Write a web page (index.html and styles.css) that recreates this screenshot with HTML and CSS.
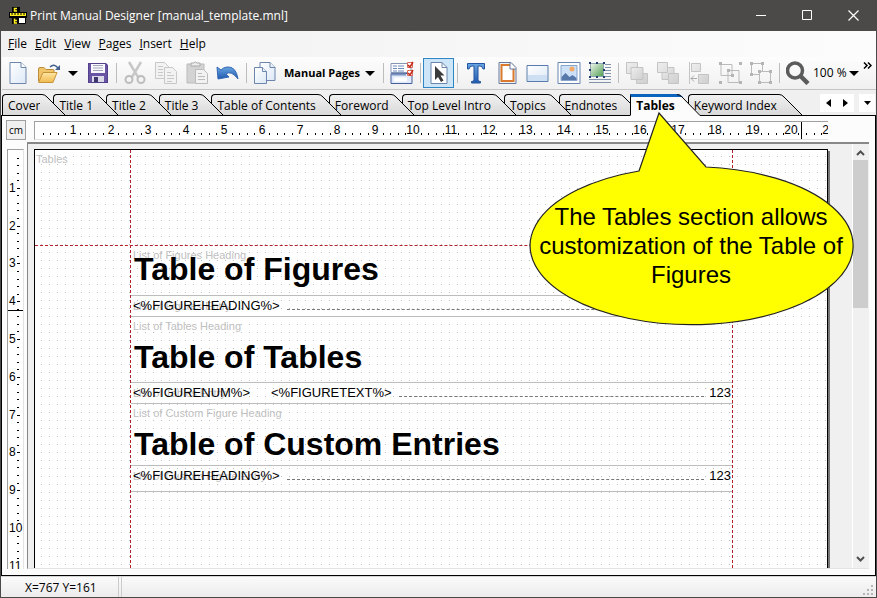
FILE: index.html
```html
<!DOCTYPE html>
<html lang="en">
<head>
<meta charset="utf-8">
<title>Print Manual Designer [manual_template.mnl]</title>
<link rel="stylesheet" href="styles.css">
</head>
<body>
<svg class="defs" aria-hidden="true">
  <defs>
    <linearGradient id="paper" x1="0" y1="0" x2="1" y2="1"><stop offset="0" stop-color="#fff"/><stop offset="1" stop-color="#dce8f6"/></linearGradient>
    <linearGradient id="folder" x1="0" y1="0" x2="0" y2="1"><stop offset="0" stop-color="#ffe7a6"/><stop offset="1" stop-color="#f0b94f"/></linearGradient>
    <linearGradient id="blue" x1="0" y1="0" x2="0" y2="1"><stop offset="0" stop-color="#6aa5e3"/><stop offset="1" stop-color="#2059ae"/></linearGradient>
    <linearGradient id="green" x1="0" y1="0" x2="1" y2="1"><stop offset="0" stop-color="#f0f7ee"/><stop offset="1" stop-color="#4f9d50"/></linearGradient>
    <linearGradient id="grey" x1="0" y1="0" x2="1" y2="1"><stop offset="0" stop-color="#eee"/><stop offset="1" stop-color="#cfcfcf"/></linearGradient>
    <linearGradient id="tabfill" x1="0" y1="0" x2="0" y2="1"><stop offset="0" stop-color="#f1f1f1"/><stop offset="1" stop-color="#d9d9d9"/></linearGradient>
    <symbol id="edge" viewBox="0 0 25 21"><path d="M0 .5H2Q5 .5 7 3L25 21H0Z" stroke="none"/><path d="M0 .5H2Q5 .5 7 3L25 21" fill="none" stroke="#000"/></symbol>
  </defs>
</svg>

<header class="titlebar">
  <svg class="logo" width="18" height="18" viewBox="0 0 18 18"><path d="M3 0h8v5h7v6H11v6H3v-6H0V5h3z" fill="#000"/><path d="M8 1.500H5.500V4H8M5.500 11.500V16H8M5.500 13.500H8" fill="none" stroke="#ffef20" stroke-width="1.5"/><path d="M1 6h16v3H1z" fill="#ffef20"/><path d="M3 6v2M6 6v2M9 6v2M12 6v2M15 6v2" stroke="#000"/><path d="M9.500 10.500h7v6h-7z" fill="#fff" stroke="#000"/></svg>
  <h1>Print Manual Designer [manual_template.mnl]</h1>
  <button class="win" aria-label="Minimize"><svg width="11" height="11"><path d="M0 5.5h10" stroke="#fff"/></svg></button>
  <button class="win" aria-label="Maximize"><svg width="11" height="11"><path d="M.5 .5h9v9h-9z" fill="none" stroke="#fff"/></svg></button>
  <button class="win" aria-label="Close"><svg width="11" height="11"><path d="M.5 .5l10 10M10.500 .5l-10 10" stroke="#fff" stroke-width="1.2"/></svg></button>
</header>

<nav class="menu" aria-label="Main menu">
  <button><u>F</u>ile</button><button><u>E</u>dit</button><button><u>V</u>iew</button><button><u>P</u>ages</button><button><u>I</u>nsert</button><button><u>H</u>elp</button>
</nav>

<div class="toolbar" role="toolbar" aria-label="Tools">
  <button class="tool" aria-label="New"><svg viewBox="0 0 24 24"><path d="M4 1.500h11l5 5v16H4z" fill="url(#paper)" stroke="#6c86ad"/><path d="M15 1.500v5h5" fill="#fff" stroke="#6c86ad"/></svg></button>
  <button class="tool" aria-label="Open"><svg viewBox="0 0 24 24"><path d="M1.500 20V8q0-1.500 1.500-1.500h4l2 2h7q1 0 1 1V12" fill="#f0c468" stroke="#b98b3a"/><path d="M1.500 21.500L6 11.500h14l-4 10z" fill="url(#folder)" stroke="#c79337"/><path d="M13 6q4-4 8 1" fill="none" stroke="#44628f" stroke-width="1.500"/><path d="M23 4v5h-5z" fill="#44628f"/></svg></button>
  <button class="drop" aria-label="Recent files"><i class="caret"></i></button>
  <button class="tool" aria-label="Save"><svg viewBox="0 0 24 24"><path d="M2 2h18l2 2v18H2z" fill="#6953a5"/><path d="M5 2h14v10H5z" fill="#f8f8fc"/><path d="M7 4.500h10M7 7h10M7 9.500h10" stroke="#a5a3ba"/><path d="M6 15h12v7H6z" fill="#d9d9e8"/><path d="M8 16h4v6H8z" fill="#41366e"/><path d="M2.500 2.500h17l2 2v17h-19z" fill="none" stroke="#53418b"/></svg></button>
  <span class="sep"></span>
  <button class="tool" aria-label="Cut" disabled><svg viewBox="0 0 24 24"><path d="M6 1l9 15M18 1L9 16" stroke="#c8c8c8" stroke-width="2.500"/><circle cx="6" cy="18.500" r="3.500" fill="none" stroke="#bdbdbd" stroke-width="2"/><circle cx="18" cy="18.500" r="3.500" fill="none" stroke="#bdbdbd" stroke-width="2"/></svg></button>
  <button class="tool" aria-label="Copy" disabled><svg viewBox="0 0 24 24"><g fill="#f2f2f2" stroke="#c8c8c8"><path d="M1.500 1.500h9l4 4v12h-13z"/><path d="M10.500 6.500h8l4 4v12h-12z"/><path d="M4 5.500h5M4 8.500h5M4 11.500h5M4 14.500h5M13 11.500h4M13 14.500h7M13 17.500h7M13 20.500h5"/></g></svg></button>
  <button class="tool" aria-label="Paste" disabled><svg viewBox="0 0 24 24"><path d="M2 3h17v19H2z" fill="#d3d3d3" stroke="#bbb"/><path d="M6 5V2h3q1-2 3 0h3v3z" fill="#eee" stroke="#aaa"/><path d="M10.500 8.500h8l4 4v10h-12z" fill="#f2f2f2" stroke="#bbb"/><path d="M13 12.500h4M13 15.500h7M13 18.500h7" stroke="#bbb"/></svg></button>
  <button class="tool" aria-label="Undo"><svg viewBox="0 0 24 24"><path d="M1 6l1 12 11-2-3-3q5-4 12 5Q20 5 11 6 7 6.500 5 9z" fill="url(#blue)" stroke="#3369b2"/></svg></button>
  <span class="sep"></span>
  <button class="tool" aria-label="Pages"><svg viewBox="0 0 24 24"><g fill="url(#paper)" stroke="#6c86ad"><path d="M7 1.500h10l5 5v13H7z"/><path d="M17 1.500v5h5"/><path d="M1.500 6.500h8l4 4v12h-12z"/><path d="M9.500 6.500v4h4"/></g></svg></button>
  <button class="mode">Manual Pages <i class="caret"></i></button>
  <span class="sep"></span>
  <button class="tool" aria-label="Page options"><svg viewBox="0 0 24 24"><path d="M1 2.500h20v9H1z" fill="#fff" stroke="#8497b5"/><path d="M3 5h4M3 7.500h4M3 10h4M8 5h6M8 7.500h6M8 10h6" stroke="#6c8abb"/><path d="M1 12.500h21v10H1z" fill="#e1eafa" stroke="#465f99"/><path d="M1 13.500h15" stroke="#7c94c0" stroke-width="2"/><path d="M4 18.500h13" stroke="#fff" stroke-width="4"/><path d="M17.500 1.500h5v5h-5zM17.500 9.500h5v5h-5z" fill="#fff" stroke="#d66b5e"/><path d="M18 4l2 2 3-5M18 12l2 2 3-5" fill="none" stroke="#c42919" stroke-width="1.500"/></svg></button>
  <span class="sep"></span>
  <button class="tool active" aria-label="Select" aria-pressed="true"><svg viewBox="0 0 24 24"><path d="M4 1.500h11l5 5v16H4z" fill="#fff" stroke="#6c86ad"/><path d="M15 1.500v5h5" fill="none" stroke="#6c86ad"/><path d="M8 5v14l3-3 3 5 2.500-1.500-3-5h4z" fill="#3b3b3b"/></svg></button>
  <span class="sep"></span>
  <button class="tool" aria-label="Text"><svg viewBox="0 0 24 24"><path d="M3.500 2.500h17V8H19q-.5-3-3-3h-2v14q0 1.500 2.500 1.500V22h-9v-1.500q2.500 0 2.500-1.500V5H8Q5.500 5 5 8H3.500z" fill="url(#blue)" stroke="#2455a0"/></svg></button>
  <button class="tool" aria-label="Page frame"><svg viewBox="0 0 24 24"><path d="M4 1.500h12l5 5v16H4z" fill="#eef3fa" stroke="#68799c"/><path d="M6.500 4h8.500l3.500 3.500V20h-12z" fill="#fff" stroke="#d97a2e" stroke-width="2"/><path d="M15 2v6h6" fill="#fff" stroke="#68799c"/></svg></button>
  <button class="tool" aria-label="Rectangle"><svg viewBox="0 0 24 24"><path d="M1 4.500h21v16H1z" fill="url(#paper)" stroke="#587aac"/><path d="M2 14h19v6H2z" fill="#cddff3"/></svg></button>
  <button class="tool" aria-label="Image"><svg viewBox="0 0 24 24"><path d="M1 1.500h22v21H1z" fill="#fff" stroke="#6685b0"/><path d="M4 4.500h16v15H4z" fill="#cce1f8" stroke="#85a5cc"/><circle cx="15" cy="8" r="2.500" fill="#f4a965"/><path d="M4.500 19v-3l4-4 4 4 3-2 4 3v2z" fill="#5678ab"/></svg></button>
  <button class="tool" aria-label="Image with text"><svg viewBox="0 0 24 24"><path d="M17 3.500h6M17 6.500h6M17 9.500h6M17 12.500h6M17 15.500h6M1 18.500h22M1 21.500h22" stroke="#8292a8"/><path d="M2.500 2.500h13v13h-13z" fill="url(#green)" stroke="#8fa5b0"/><path d="M1 1h2v2H1zM8 1h2v2H8zM15 1h2v2h-2zM1 8h2v2H1zM15 8h2v2h-2zM1 15h2v2H1zM8 15h2v2H8zM15 15h2v2h-2z" fill="#223c70"/></svg></button>
  <span class="sep"></span>
  <button class="tool" aria-label="Bring to front" disabled><svg viewBox="0 0 24 24"><g fill="url(#grey)" stroke="#c4c4c4"><path d="M1.500 1.500h11v11h-11zM11.500 12.500h11v10h-11z"/><path d="M6 6.500h12v12H6z"/></g></svg></button>
  <button class="tool" aria-label="Send to back" disabled><svg viewBox="0 0 24 24"><g fill="url(#grey)" stroke="#c4c4c4"><path d="M6 6.500h12v12H6z"/><path d="M1.500 1.500h10v10h-10zM12.500 12.500h10v10h-10z"/></g></svg></button>
  <button class="tool" aria-label="Align" disabled><svg viewBox="0 0 24 24"><path d="M2.500 1v22" stroke="#c4c4c4"/><path d="M4.500 2.500h9v8h-9zM11.500 13.500h10v9h-10z" fill="url(#grey)" stroke="#c4c4c4"/><path d="M4 17.500h6M7 14.500l-3 3 3 3" fill="none" stroke="#aaa"/></svg></button>
  <button class="tool" aria-label="Group" disabled><svg viewBox="0 0 24 24"><path d="M3 3.500h11v11H3zM10 9.500h11v12H10z" fill="none" stroke="#bbb"/><path d="M1 1h3v3H1zM21 1h3v3h-3zM1 20h3v3H1zM21 20h3v3h-3zM9 8h3v3H9zM13 13h3v3h-3z" fill="#b5b5b5"/></svg></button>
  <button class="tool" aria-label="Ungroup" disabled><svg viewBox="0 0 24 24"><path d="M10 13.500H2.500v-11h11V10M10.500 10.500h11v11h-11z" fill="none" stroke="#bbb"/><path d="M1 1h3v3H1zM12 1h3v3h-3zM1 12h3v3H1zM9 9h3v3H9zM20 9h3v3h-3zM9 20h3v3H9zM20 20h3v3h-3z" fill="#b5b5b5"/></svg></button>
  <span class="sep"></span>
  <button class="tool" aria-label="Zoom"><svg viewBox="0 0 24 24"><circle cx="9" cy="9.500" r="7.500" fill="none" stroke="#5b5b5b" stroke-width="3.500"/><path d="M14.500 15l7.500 7.500" stroke="#5b5b5b" stroke-width="4.500"/></svg></button>
  <button class="zoom">100 % <i class="caret"></i></button>
  <button class="more" aria-label="More tools"><svg width="9" height="7"><path d="M1 .5l3 3-3 3M5 .5l3 3-3 3" fill="none" stroke="#000" stroke-width="1.500"/></svg></button>
</div>

<div class="tabbar">
  <div class="tabs" role="tablist">
    <button class="tab" role="tab"><span>Cover</span><svg><use href="#edge"/></svg></button>
    <button class="tab" role="tab"><span>Title 1</span><svg><use href="#edge"/></svg></button>
    <button class="tab" role="tab"><span>Title 2</span><svg><use href="#edge"/></svg></button>
    <button class="tab" role="tab"><span>Title 3</span><svg><use href="#edge"/></svg></button>
    <button class="tab" role="tab"><span>Table of Contents</span><svg><use href="#edge"/></svg></button>
    <button class="tab" role="tab"><span>Foreword</span><svg><use href="#edge"/></svg></button>
    <button class="tab" role="tab"><span>Top Level Intro</span><svg><use href="#edge"/></svg></button>
    <button class="tab" role="tab"><span>Topics</span><svg><use href="#edge"/></svg></button>
    <button class="tab" role="tab"><span>Endnotes</span><svg><use href="#edge"/></svg></button>
    <button class="tab selected" role="tab" aria-selected="true"><span>Tables</span><svg viewBox="0 0 25 22"><path d="M0 .5H2Q5 .5 7 3L25 21.500V22H0Z" fill="#fcfcfc"/><path d="M0 0H2Q5 0 8 3H0Z" fill="#0a64bd"/><path d="M2 .5Q5 .5 7 3L25 21.500" fill="none" stroke="#000"/></svg></button>
    <button class="tab" role="tab"><span>Keyword Index</span><svg><use href="#edge"/></svg></button>
  </div>
  <div class="tabnav">
    <button aria-label="Previous tab"><svg width="5" height="8"><path d="M5 0v8L0 4z"/></svg></button>
    <button aria-label="Next tab"><svg width="5" height="8"><path d="M0 0v8l5-4z"/></svg></button>
    <button class="list" aria-label="Tab list"><svg width="7" height="4"><path d="M0 0h7L3.500 4z"/></svg></button>
  </div>
</div>

<main class="workspace">
  <button class="unit">cm</button>
  <div class="ruler across" aria-hidden="true"><svg id="hruler"></svg></div>
  <div class="ruler down" aria-hidden="true"><svg id="vruler"></svg></div>
  <section class="canvas">
    <div class="page">
      <span class="hint page-name">Tables</span>
      <div class="body">
        <div class="frame first"><span class="hint">List of Figures Heading</span><h2>Table of Figures</h2></div>
        <div class="entry"><span class="hint">List of Figures Entry</span><p><span>&lt;%FIGUREHEADING%&gt;</span><i class="leader"></i><span>123</span></p></div>
        <div class="frame"><span class="hint">List of Tables Heading</span><h2>Table of Tables</h2></div>
        <div class="entry"><span class="hint">List of Tables Entry</span><p><span class="num">&lt;%FIGURENUM%&gt;</span><span>&lt;%FIGURETEXT%&gt;</span><i class="leader"></i><span>123</span></p></div>
        <div class="frame"><span class="hint">List of Custom Figure Heading</span><h2>Table of Custom Entries</h2></div>
        <div class="entry last"><span class="hint">List of Custom Figure Entry</span><p><span>&lt;%FIGUREHEADING%&gt;</span><i class="leader"></i><span>123</span></p></div>
      </div>
      <i class="guide left"></i><i class="guide right"></i><i class="guide top"></i>
    </div>
    <div class="scrollbar" aria-hidden="true">
      <svg width="9" height="6"><path d="M1 5l3.500-3.500L8 5" fill="none" stroke="#505050" stroke-width="2"/></svg>
      <i class="thumb"></i>
      <svg width="9" height="6"><path d="M1 1l3.500 3.500L8 1" fill="none" stroke="#505050" stroke-width="2"/></svg>
    </div>
  </section>
  <aside class="callout">
    <svg viewBox="0 0 326 216"><path d="M110 60L130 2L177 56A161.500 79 0 1 1 110 60Z" fill="#ff0" stroke="#222" stroke-width="1.200"/></svg>
    <p>The Tables section allows customization of the Table of Figures</p>
  </aside>
</main>

<footer class="status">
  <span class="coords">X=767 Y=161</span>
  <span class="message"></span>
  <svg width="11" height="11"><path d="M8 0h2v2H8zM4 4h2v2H4zM8 4h2v2H8zM0 8h2v2H0zM4 8h2v2H4zM8 8h2v2H8z" fill="#b5b5b5"/></svg>
</footer>
<script src="rulers.js"></script>
</body>
</html>
```
FILE: styles.css
```css
* { box-sizing: border-box; }
body {
  margin: 0;
  height: 100vh;
  display: flex;
  flex-direction: column;
  overflow: hidden;
  background: #f0f0f0;
  border: solid #4b4a48;
  border-width: 0 1px 1px;
  color: #000;
  font: 12px/16px "Open Sans", "Noto Sans", sans-serif;
}
button { margin: 0; padding: 0; border: 0; background: none; color: inherit; font: inherit; }
h1, h2, p { margin: 0; }
.defs { position: absolute; width: 0; height: 0; }

.titlebar { flex: none; display: flex; align-items: center; height: 31px; padding-left: 8px; background: #4b4a48; color: #fff; }
.titlebar h1 { flex: 1; padding-left: 3px; font-size: 12px; font-weight: 400; }
.win { width: 46px; height: 31px; display: grid; place-items: center; }

.menu { flex: none; display: flex; gap: 8px; height: 26px; padding-left: 7px; align-items: center; background: linear-gradient(90deg, #f0f0f0, #fcfcfc); }

.toolbar {
  flex: none;
  display: flex;
  align-items: center;
  height: 33px;
  margin-left: 1px;
  background: linear-gradient(#fdfdfd, #f0f0f0);
  border-bottom: 1px solid #c5c5c5;
}
.tool { flex: none; width: 31px; height: 30px; display: grid; place-items: center; }
.tool svg { width: 24px; height: 24px; }
.tool.active { background: #cde6f7; border: 1px solid #2f86c5; }
.sep { flex: none; width: 6px; height: 20px; background: linear-gradient(#bdbdbd, #bdbdbd) 3px 0 / 1px 100% no-repeat; }
.drop { width: 18px; }
.caret { display: inline-block; border: solid transparent; border-width: 5px 5px 0; border-top-color: #000; vertical-align: middle; }
.mode { width: 100px; display: flex; align-items: center; justify-content: space-between; padding: 0 5px 0 4px; font-size: 11px; font-weight: 700; white-space: nowrap; }
.zoom { width: 46px; display: flex; align-items: center; justify-content: space-between; white-space: nowrap; }
.more { flex: 1; align-self: flex-start; padding-top: 4px; line-height: 8px; }

.tabbar { flex: none; display: flex; height: 26px; padding: 4px 0 0 1px; background: linear-gradient(#000, #000) 0 100% / 100% 1px no-repeat #f0f0f0; }
.tabs { display: flex; flex: 1; min-width: 0; isolation: isolate; }
.tab { display: flex; flex: none; height: 22px; margin-right: -12px; position: relative; white-space: nowrap; }
.tab span {
  height: 22px;
  padding: 3px 0 0 5px;
  border: solid #000;
  border-width: 1px 0 1px 1px;
  border-radius: 4px 0 0 0;
  background: linear-gradient(#f1f1f1, #d9d9d9);
}
.tab svg { width: 25px; height: 21px; fill: url(#tabfill); }
.tab:nth-child(1) { z-index: 11; }
.tab:nth-child(2) { z-index: 10; }
.tab:nth-child(3) { z-index: 9; }
.tab:nth-child(4) { z-index: 8; }
.tab:nth-child(5) { z-index: 7; }
.tab:nth-child(6) { z-index: 6; }
.tab:nth-child(7) { z-index: 5; }
.tab:nth-child(8) { z-index: 4; }
.tab:nth-child(9) { z-index: 3; }
.tab.selected { z-index: 12; font-weight: 700; }
.tab.selected span { padding-top: 1px; border-top: 3px solid #0a64bd; border-bottom-color: #fcfcfc; background: #fcfcfc; border-radius: 0; }
.tab.selected svg { height: 22px; }
.tabnav { flex: none; display: flex; height: 18px; padding-right: 1px; }
.tabnav button { width: 17px; background: #fff; display: grid; place-items: center; }
.tabnav .list { width: 16px; margin-left: 5px; }

.workspace {
  flex: 1;
  min-height: 0;
  position: relative;
  display: grid;
  grid-template: 26px 1fr / 25px 1fr;
  padding-right: 6px;
  padding-bottom: 6px;
  border: solid #000;
  border-width: 0 1px 1px;
  background: #fcfcfc;
}
.unit { width: 20px; height: 20px; margin: 4px 0 0 4px; border: 1px solid #a0a0a0; background: #f0f0f0; font-size: 10px; line-height: 16px; }
.ruler { overflow: hidden; border: solid #a0a0a0; border-width: 1px 0 0 1px; background: #fff; }
.ruler svg { display: block; font: 12px "Liberation Sans", sans-serif; shape-rendering: crispEdges; }
.across { height: 19px; margin: 5px 41px 0 7px; border-bottom: 1px solid #e3e3e3; }
.down { width: 17px; margin: 7px 0 0 5px; border-right: 1px solid #e3e3e3; }

.canvas { min-height: 0; overflow: hidden; display: flex; border: solid #888; border-width: 2px 0 0 1px; border-bottom: 1px solid #e3e3e3; background: #f0f0f0; }
.page {
  flex: 1;
  position: relative;
  margin: 5px 24px 0 6px;
  border: solid #000;
  border-width: 1px 1px 0;
  box-shadow: 2px 2px #777;
  background: conic-gradient(from 0deg at 1px 1px, transparent 75%, #bdbdbd 0) 6px 6px / 8px 8px #fff;
}
.hint { color: #c0c0c0; font: 11px/14px "Liberation Sans", sans-serif; }
.page-name { display: block; padding: 2px 1px; }
.body { margin: 77px 94px 0 96px; font-family: "Liberation Sans", sans-serif; }
.frame, .entry { display: grid; grid-template-rows: 19px 1fr; }
.frame { height: 65px; padding-left: 2px; }
.frame .hint, .frame h2 { grid-column: 1; }
.frame .hint { padding-top: 2px; }
.frame h2 { padding-left: 1px; font-size: 32px; line-height: 42px; }
.frame.first { height: 50px; }
.frame.first h2 { grid-row: 1; padding-top: 3px; }
.frame.first .hint { grid-row: 1; padding-top: 3px; }
.frame:nth-child(5) { height: 61px; }
.entry { height: 22px; border: solid #bdbdbd; border-width: 1px 0; }
.entry.last { height: 27px; }
.entry > * { grid-area: 1 / 1; }
.entry .hint { padding: 3px 0 0 2px; }
.entry p { display: flex; padding: 0 2px; font-size: 13px; line-height: 20px; position: relative; }
.entry .num { width: 138px; }
.leader { flex: 1; height: 14px; margin: 0 5px 0 7px; border-bottom: 1px dashed #777; }
.guide { position: absolute; border: 0 dashed #b3202c; }
.left, .right { top: 0; bottom: 0; border-left-width: 1px; }
.left { left: 95px; }
.right { right: 94px; }
.top { top: 95px; left: 0; right: 0; border-top-width: 1px; }
.scrollbar { width: 16px; margin-right: 1px; padding: 6px 0; display: flex; flex-direction: column; align-items: center; background: #f0f0f0; border-left: 1px solid #fff; }
.thumb { width: 15px; height: 148px; margin: 4px 0 auto; background: #cdcdcd; }

.callout { position: absolute; z-index: 20; right: 20px; top: -5px; width: 326px; }
.callout svg { display: block; width: 326px; }
.callout p { position: absolute; inset: 91px 2px auto 0; text-align: center; font: 24px/29px "Liberation Sans", sans-serif; }

.status { flex: none; display: flex; align-items: stretch; gap: 2px; height: 21px; background: linear-gradient(#fafafa, #ececec); border-top: 1px solid #d5d5d5; }
.coords { width: 118px; padding: 3px 0 0 24px; border-right: 1px solid #ccc; }
.message { flex: 1; border-left: 1px solid #ccc; }
.status svg { align-self: flex-end; margin: 0 2px 1px 0; }
```
FILE: rulers.js
```js
// Pixels per centimetre at 96 dpi.
const CM = 96 / 2.54;

function drawRuler(svg, vertical, marker) {
  const box = svg.parentElement;
  const length = vertical ? box.clientHeight : box.clientWidth;
  const steps = Math.floor((length + 4) * 5 / CM);
  const parts = [];
  for (let i = 1; i <= steps; i++) {
    const at = Math.round(i * CM / 5);
    if (i % 5) {
      parts.push(vertical
        ? `<rect x="9" y="${at}" width="2" height="1"/>`
        : `<rect x="${at}" y="11" width="1" height="2"/>`);
    } else if (vertical) {
      parts.push(`<text x="1" y="${at + 4}">${i / 5}</text>`);
      if (i < 50) parts.push(`<rect x="9" y="${at}" width="3" height="1"/>`);
    } else {
      parts.push(`<text x="${at}" y="12" text-anchor="middle">${i / 5}</text>`);
    }
  }
  parts.push(vertical
    ? `<rect x="0" y="${marker}" width="17" height="1"/>`
    : `<rect x="${marker}" y="0" width="1" height="18"/>`);
  svg.setAttribute("width", vertical ? 17 : length);
  svg.setAttribute("height", vertical ? length : 18);
  svg.innerHTML = parts.join("");
}

function drawRulers() {
  const across = document.getElementById("hruler");
  const down = document.getElementById("vruler");
  across.innerHTML = down.innerHTML = "";
  across.setAttribute("width", 0);
  down.setAttribute("height", 0);
  drawRuler(across, false, 766);
  drawRuler(down, true, 160);
}

drawRulers();
window.addEventListener("resize", drawRulers);
```
